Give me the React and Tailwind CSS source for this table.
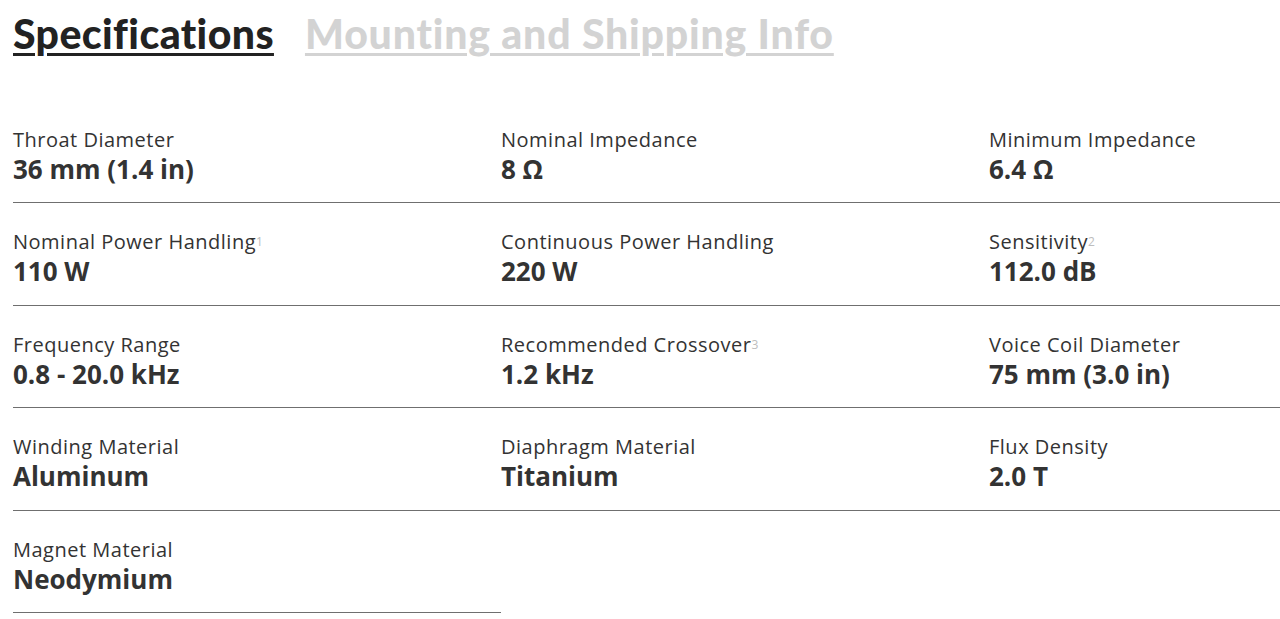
import React from "react";

const rows = [
  [
    ["Throat Diameter", "36 mm (1.4 in)"],
    ["Nominal Impedance", "8 Ω"],
    ["Minimum Impedance", "6.4 Ω"],
  ],
  [
    ["Nominal Power Handling", "110 W", "1"],
    ["Continuous Power Handling", "220 W"],
    ["Sensitivity", "112.0 dB", "2"],
  ],
  [
    ["Frequency Range", "0.8 - 20.0 kHz"],
    ["Recommended Crossover", "1.2 kHz", "3"],
    ["Voice Coil Diameter", "75 mm (3.0 in)"],
  ],
  [
    ["Winding Material", "Aluminum"],
    ["Diaphragm Material", "Titanium"],
    ["Flux Density", "2.0 T"],
  ],
  [["Magnet Material", "Neodymium"]],
];

const items = rows.flat();

export default function App() {
  return (
    <div className="w-[1280px] h-[619px] overflow-hidden bg-white" style={{ fontFamily: '"Open Sans", sans-serif' }}>
      <div className="pl-[13px] pt-[9px] flex gap-[31px] h-[100px]" style={{ fontFamily: 'Lato, sans-serif' }}>
        <span className="text-[41px] leading-[50px] h-[50px] font-black text-[#222] underline decoration-[3px] underline-offset-[4px] tracking-[0.4px]">
          Specifications
        </span>
        <span className="text-[41px] leading-[50px] h-[50px] font-black text-[#d3d3d3] underline decoration-[3px] underline-offset-[4px] tracking-[0.8px]">
          Mounting and Shipping Info
        </span>
      </div>
      <div className="pl-[13px] mt-[0.5px] grid grid-cols-[488px_488px_488px] w-[1477px]">
        {items.map(([label, value, sup], i) => (
          <div key={i} className="border-b border-[#6f6f6f] pt-[25px] h-[102.5px]">
            <div className="text-[20px] leading-[28px] text-[#333] tracking-[0.5px]">
              {label}
              {sup && <sup className="text-[12px] text-[#bdbdbd] relative top-[-3px]">{sup}</sup>}
            </div>
            <div className="text-[26px] leading-[31px] font-bold text-[#333]">{value}</div>
          </div>
        ))}
      </div>
    </div>
  );
}
